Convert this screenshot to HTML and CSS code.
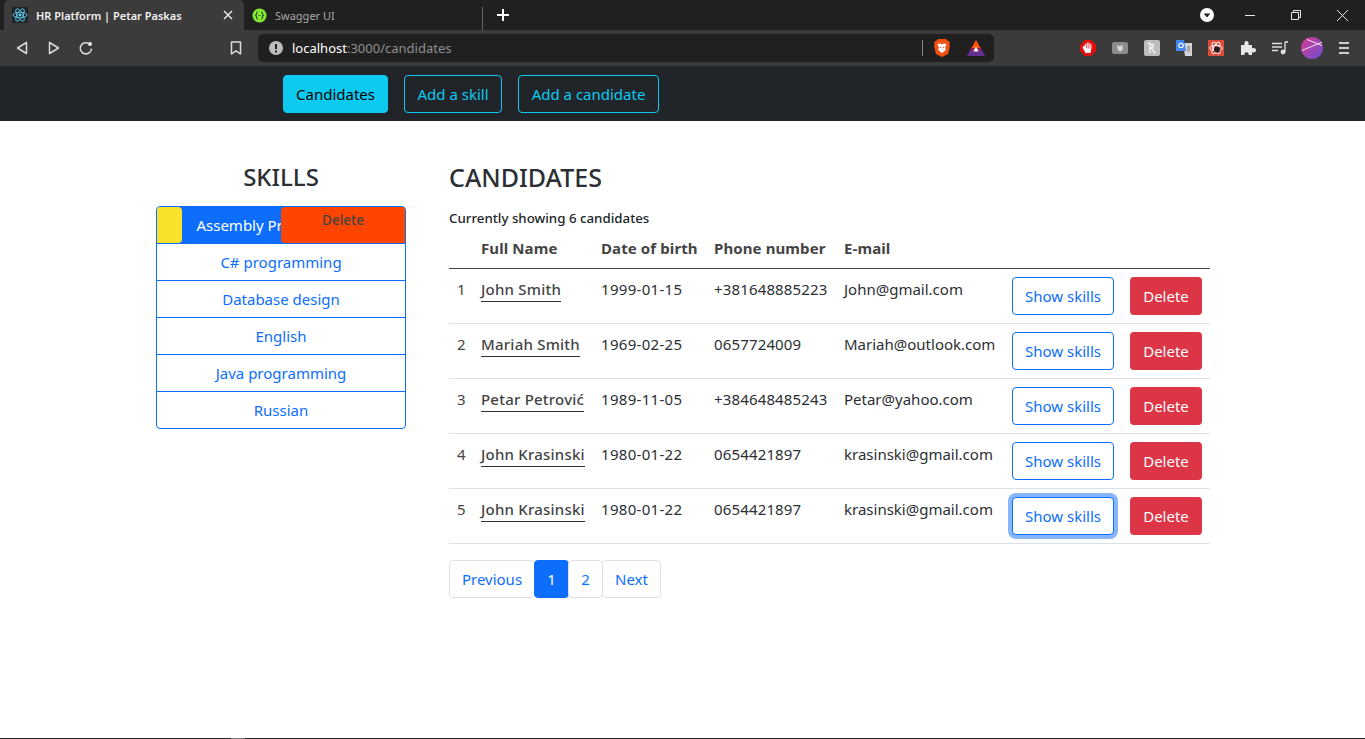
FILE: index.html
```html
<!DOCTYPE html>
<html lang="en">
<head>
<meta charset="utf-8">
<title>HR Platform | Petar Paskas</title>
<link rel="stylesheet" href="styles.css">
</head>
<body>
<div class="app">
  <div class="tabstrip">
    <div class="tab tab-active">
      <svg class="favicon" viewBox="0 0 16 16"><rect width="16" height="16" rx="1" fill="#20232a"/><g fill="none" stroke="#61dafb" stroke-width=".8"><ellipse cx="8" cy="8" rx="7" ry="2.8"/><ellipse cx="8" cy="8" rx="7" ry="2.8" transform="rotate(60 8 8)"/><ellipse cx="8" cy="8" rx="7" ry="2.8" transform="rotate(120 8 8)"/></g><circle cx="8" cy="8" r="1.4" fill="#61dafb"/></svg>
      <span class="tab-title">HR Platform | Petar Paskas</span>
      <svg class="tab-close" viewBox="0 0 10 10"><path d="M1 1l8 8M9 1l-8 8" stroke="#e8e8e8" stroke-width="1.5"/></svg>
    </div>
    <div class="tab tab-idle">
      <svg class="favicon" viewBox="0 0 16 16"><circle cx="8" cy="8" r="7.5" fill="#85ea2d"/><path d="M6 4C4.600 4 5.200 7.400 4 8c1.200.6.6 4 2 4M10 4c1.400 0 .8 3.400 2 4-1.200.6-.6 4-2 4" fill="none" stroke="#173647" stroke-width="1.100"/><path d="M6.600 8h.6M7.800 8h.6M9 8h.6" stroke="#173647" stroke-width="1"/></svg>
      <span class="tab-title-idle">Swagger UI</span>
    </div>
    <div class="tab-sep"></div>
    <svg class="newtab" viewBox="0 0 12 12"><path d="M6 0v12M0 6h12" stroke="#fff" stroke-width="2"/></svg>
    <div class="spacer"></div>
    <svg class="tab-search" viewBox="0 0 14 14"><circle cx="7" cy="7" r="7" fill="#fff"/><path d="M3.600 5.400h6.800L7 9.600z" fill="#202020"/></svg>
    <div class="winbtn"><svg viewBox="0 0 10 10" width="10" height="10"><path d="M0 5.500h10" stroke="#e8e8e8"/></svg></div>
    <div class="winbtn"><svg viewBox="0 0 10 10" width="10" height="10"><path d="M.5 2.500h7v7h-7zM2.500 2.500v-2h7v7h-2" fill="none" stroke="#e8e8e8"/></svg></div>
    <div class="winbtn"><svg viewBox="0 0 10 10" width="11" height="11"><path d="M0 0l10 10M10 0L0 10" stroke="#e8e8e8" stroke-width=".9"/></svg></div>
  </div>

  <div class="toolbar">
    <svg class="tool tool-back" viewBox="0 0 12 14"><path d="M10.500 1.500v11L1.500 7z" fill="none" stroke="#dcdcdc" stroke-width="1.500" stroke-linejoin="round"/></svg>
    <svg class="tool tool-forward" viewBox="0 0 12 14"><path d="M1.500 1.500v11l9-5.500z" fill="none" stroke="#dcdcdc" stroke-width="1.500" stroke-linejoin="round"/></svg>
    <svg class="tool tool-reload" viewBox="0 0 14 14"><path d="M12.500 7.500A5.600 5.600 0 1 1 9.500 2.300" fill="none" stroke="#dcdcdc" stroke-width="1.500"/><circle cx="11" cy="3" r="2" fill="#e8e8e8"/></svg>
    <svg class="tool tool-bookmark" viewBox="0 0 12 14"><path d="M1.500 1h9v12L6 9.800 1.500 13z" fill="none" stroke="#dcdcdc" stroke-width="1.500" stroke-linejoin="round"/></svg>
    <div class="urlbar">
      <svg class="url-alert" viewBox="0 0 14 14"><circle cx="7" cy="7" r="7" fill="#bdbdbd"/><path d="M7 3v5M7 9.500v2" stroke="#202020" stroke-width="2"/></svg>
      <span class="url-host">localhost</span><span class="url-path">:3000/candidates</span>
      <div class="spacer"></div>
      <div class="url-sep"></div>
      <svg class="url-brave" viewBox="0 0 16 18"><path d="M4 0h8l1.500 1.500L16 3l-.6 2.500.6 1.500-2 8L8 18l-6-3-2-8 .6-1.500L0 3l2.500-1.500z" fill="#f1500f"/><path d="M3.500 5L6 4.500l2 .8 2-.8L12.500 5 11 9l1 1.500L9.500 13 8 14l-1.500-1L4 10.500 5 9z" fill="#fff"/><path d="M6 8.200l1.200.6M10 8.200l-1.200.6" stroke="#f1500f" stroke-width="1"/></svg>
      <svg class="url-bat" viewBox="0 0 18 16"><path d="M9 0L0 16h18z" fill="#9e1f63"/><path d="M9 0L4.500 8h9z" fill="#ff5000"/><path d="M0 16l3-5.500h12l3 5.500z" fill="#662d91"/><path d="M9 6.500l-2.700 5h5.400z" fill="#fff"/></svg>
    </div>
    <div class="ext-group">
      <div class="ext"><svg viewBox="0 0 16 16" width="16" height="16"><path d="M5 0h6l5 5v6l-5 5H5l-5-5V5z" fill="#e60c0c"/><path d="M5.300 8V4.500M7.200 8V3M9 8V3M10.800 8.500V4.500M5.300 8l-1-1.200C3.500 6.200 3 7.200 3.500 8.200L6 12.500h4l.8-4" fill="#fff" stroke="#fff" stroke-width="1.200" stroke-linecap="round"/></svg></div>
      <div class="ext"><svg viewBox="0 0 16 12" width="16" height="12"><rect width="16" height="12" rx="2.500" fill="#8c8c8c"/><path d="M5 3l3 1.500 2-2 1 4-2 3-3-1z" fill="#d8d8d8"/></svg></div>
      <div class="ext"><svg viewBox="0 0 16 16" width="16" height="16"><rect width="16" height="16" rx="2" fill="#bdbdbd"/><path d="M6 2.500V13M3.500 3.500h2.500M6 8c2 0 3.500-1 3.500-2.500S7.500 3.500 7.500 5.500M6 8c2.500 0 3 1.500 3.500 3.500.3 1 1 1.500 2 1" fill="none" stroke="#fff" stroke-width="1.100"/></svg></div>
      <div class="ext"><svg viewBox="0 0 16 16" width="16" height="16"><path d="M7 3h9v13H9z" fill="#d6d6d6"/><path d="M0 0h8l2 11H0z" fill="#4285f4"/><circle cx="5" cy="5.500" r="2.200" fill="none" stroke="#fff" stroke-width="1.100"/><path d="M11 7h3.500M12.800 6v1M11.500 8c.6 2 1.500 3 3 3.500M14 8c-.5 2-1.500 3-3 3.500" stroke="#777" stroke-width=".8" fill="none"/></svg></div>
      <div class="ext"><svg viewBox="0 0 16 16" width="16" height="16"><rect width="16" height="16" fill="#dd4b39"/><g fill="none" stroke="#fff" stroke-width=".9"><ellipse cx="8" cy="8" rx="6.500" ry="2.600"/><ellipse cx="8" cy="8" rx="6.500" ry="2.600" transform="rotate(60 8 8)"/><ellipse cx="8" cy="8" rx="6.500" ry="2.600" transform="rotate(120 8 8)"/></g><circle cx="9" cy="9.500" r="3" fill="#2a1a1a"/></svg></div>
      <div class="ext"><svg viewBox="0 0 16 16" width="16" height="16"><path d="M1 5h3.500C4 2.500 5 1 6.500 1S9 2.500 8.500 5H12v3.300c2.500-.6 4 .4 4 2s-1.500 2.600-4 2V15H8.500c.5-2-.5-2.800-2-2.800s-2.500.8-2 2.800H1z" fill="#e8e8e8"/></svg></div>
      <div class="ext"><svg viewBox="0 0 16 14" width="16" height="14"><path d="M0 2.500h10M0 6h10M0 9.500h6" stroke="#e0e0e0" stroke-width="1.300"/><path d="M13 1v10" stroke="#e0e0e0" stroke-width="1.300"/><path d="M13 1h3" stroke="#e0e0e0" stroke-width="1.600"/><circle cx="11" cy="11" r="2.400" fill="#e0e0e0"/></svg></div>
      <div class="ext"><svg viewBox="0 0 22 22" width="22" height="22"><defs><linearGradient id="avatar" x1="0" y1="0" x2="1" y2="1"><stop offset="0" stop-color="#d83a8c"/><stop offset="1" stop-color="#6d4fd6"/></linearGradient></defs><circle cx="11" cy="11" r="11" fill="url(#avatar)"/><path d="M1 13.500L21 5M6 2.500l15 6" stroke="#f3e3ee" stroke-width="1"/></svg></div>
      <div class="ext"><svg viewBox="0 0 10 12" width="10" height="12"><path d="M0 1h10M0 6h10M0 11h10" stroke="#cfcfcf" stroke-width="1.800"/></svg></div>
    </div>
  </div>

  <nav class="navbar">
    <a class="nav-btn nav-btn-active">Candidates</a>
    <a class="nav-btn nav-btn-skill">Add a skill</a>
    <a class="nav-btn nav-btn-candidate">Add a candidate</a>
  </nav>

  <main class="main">
    <section class="skills">
      <h3 class="heading heading-center">SKILLS</h3>
      <ul class="skill-list">
        <li class="skill skill-active">Assembly Programming
          <span class="skill-color"></span>
          <span class="skill-delete">Delete</span>
        </li>
        <li class="skill">C# programming</li>
        <li class="skill">Database design</li>
        <li class="skill">English</li>
        <li class="skill">Java programming</li>
        <li class="skill">Russian</li>
      </ul>
    </section>

    <section class="candidates">
      <h3 class="heading">CANDIDATES</h3>
      <p class="count">Currently showing 6 candidates</p>
      <table class="table">
        <colgroup>
          <col class="c-num"><col class="c-name"><col class="c-dob"><col class="c-phone"><col class="c-mail"><col class="c-show"><col class="c-del">
        </colgroup>
        <thead>
          <tr><th></th><th>Full Name</th><th>Date of birth</th><th>Phone number</th><th>E-mail</th><th></th><th></th></tr>
        </thead>
        <tbody>
          <tr><td class="num">1</td><td><span class="name">John Smith</span></td><td class="date">1999-01-15</td><td class="phone">+381648885223</td><td>John@gmail.com</td><td><button class="btn btn-outline">Show skills</button></td><td><button class="btn btn-danger">Delete</button></td></tr>
          <tr><td class="num">2</td><td><span class="name">Mariah Smith</span></td><td class="date">1969-02-25</td><td class="phone">0657724009</td><td>Mariah@outlook.com</td><td><button class="btn btn-outline">Show skills</button></td><td><button class="btn btn-danger">Delete</button></td></tr>
          <tr><td class="num">3</td><td><span class="name">Petar Petrović</span></td><td class="date">1989-11-05</td><td class="phone">+384648485243</td><td>Petar@yahoo.com</td><td><button class="btn btn-outline">Show skills</button></td><td><button class="btn btn-danger">Delete</button></td></tr>
          <tr><td class="num">4</td><td><span class="name">John Krasinski</span></td><td class="date">1980-01-22</td><td class="phone">0654421897</td><td>krasinski@gmail.com</td><td><button class="btn btn-outline">Show skills</button></td><td><button class="btn btn-danger">Delete</button></td></tr>
          <tr><td class="num">5</td><td><span class="name">John Krasinski</span></td><td class="date">1980-01-22</td><td class="phone">0654421897</td><td>krasinski@gmail.com</td><td><button class="btn btn-outline btn-focus">Show skills</button></td><td><button class="btn btn-danger">Delete</button></td></tr>
        </tbody>
      </table>
      <div class="pagination">
        <a class="page page-prev">Previous</a>
        <a class="page page-num page-current">1</a>
        <a class="page page-num">2</a>
        <a class="page page-next">Next</a>
      </div>
    </section>
  </main>

  <div class="bottom-edge"><div class="bottom-mark"></div></div>
</div>
</body>
</html>
```
FILE: styles.css
```css
* { box-sizing: border-box; }
html, body { margin: 0; height: 100%; overflow: hidden; }
body { font-family: "Noto Sans", "Open Sans", sans-serif; font-size: 15px; color: #212529; background: #fff; }
.app { height: 739px; display: flex; flex-direction: column; }
.spacer { flex: 1; }

/* browser tab strip */
.tabstrip { height: 30px; flex: none; background: #202020; display: flex; align-items: center; padding-left: 4px; }
.tab { height: 30px; display: flex; align-items: center; flex: none; }
.tab-active { width: 240px; background: #3b3b3b; border-radius: 5px 5px 0 0; padding: 0 7px 0 8px; }
.tab-idle { width: 239px; padding-left: 8px; }
.favicon { width: 16px; height: 16px; flex: none; }
.tab-idle .favicon { width: 15px; height: 15px; }
.tab-title { margin-left: 8px; font-size: 11px; font-weight: 600; color: #f2f2f2; flex: 1; white-space: nowrap; }
.tab-title-idle { margin-left: 8px; font-size: 11px; color: #a8a8a8; }
.tab-close { width: 10px; height: 10px; margin-right: 4px; }
.tab-sep { width: 1px; height: 23px; margin-top: 7px; background: #666; flex: none; margin-left: -1px; }
.newtab { width: 12px; height: 12px; margin-left: 14px; flex: none; }
.tab-search { width: 14px; height: 14px; margin-right: 13px; flex: none; }
.winbtn { width: 46px; height: 30px; display: flex; align-items: center; justify-content: center; flex: none; }

/* browser toolbar */
.toolbar { height: 36px; flex: none; background: #3b3b3b; display: flex; align-items: center; padding-left: 16px; }
.tool { flex: none; }
.tool-back { width: 12px; height: 14px; }
.tool-forward { width: 12px; height: 14px; margin-left: 20px; }
.tool-reload { width: 14px; height: 14px; margin-left: 19px; }
.tool-bookmark { width: 12px; height: 14px; margin-left: 137px; }
.urlbar { width: 736px; height: 28px; margin-left: 16px; background: #202020; border-radius: 5px; display: flex; align-items: center; padding: 0 9px 0 11px; flex: none; }
.url-alert { width: 14px; height: 14px; margin-right: 9px; flex: none; }
.url-host { font-size: 13px; color: #fff; }
.url-path { font-size: 13px; color: #8f8f8f; }
.url-sep { width: 1px; height: 16px; background: #888; margin-right: 11px; }
.url-brave { width: 16px; height: 18px; margin-right: 17px; }
.url-bat { width: 18px; height: 16px; }
.ext-group { display: flex; margin-left: 78px; }
.ext { width: 32px; height: 32px; display: flex; align-items: center; justify-content: center; flex: none; }

/* page navbar */
.navbar { height: 55px; flex: none; background: #212529; display: flex; align-items: flex-start; gap: 16px; padding: 9px 0 0 283px; }
.nav-btn { height: 38px; display: flex; align-items: center; justify-content: center; border: 1px solid #0dcaf0; border-radius: 4px; color: #0dcaf0; font-size: 15px; }
.nav-btn-active { width: 105px; background: #0dcaf0; color: #000; }
.nav-btn-skill { width: 98px; }
.nav-btn-candidate { width: 141px; }

/* main layout */
.main { flex: 1; display: flex; gap: 43px; padding: 37px 0 0 156px; min-height: 0; }
.skills { width: 250px; flex: none; }
.candidates { width: 761px; flex: none; }
.heading { margin: 0; font-size: 25px; font-weight: 500; line-height: 38px; height: 48px; color: #2b2f33; }
.heading-center { text-align: center; font-size: 24px; }

/* skills list */
.skill-list { position: relative; list-style: none; margin: 0; padding: 0; border: 1px solid #0d6efd; border-radius: 4px; overflow: hidden; }
.skill { height: 37px; line-height: 36px; text-align: center; color: #0d6efd; border-bottom: 1px solid #0d6efd; white-space: nowrap; }
.skill:last-child { height: 36px; border-bottom: 0; }
.skill-active { position: relative; background: #0d6efd; color: #fff; }
.skill-color { position: absolute; left: 0; top: 0; width: 25px; height: 36px; background: #f9e22b; border-radius: 0 4px 4px 0; }
.skill-delete { position: absolute; right: 0; top: 0; width: 124px; height: 36px; background: #ff4500; border-radius: 4px 0 0 4px; color: #444; font-size: 13.500px; font-weight: 500; line-height: 26px; }

/* candidates */
.count { margin: 0; height: 24px; font-size: 13.300px; font-weight: 500; line-height: 24px; }
.table { width: 761px; table-layout: fixed; border-collapse: collapse; }
.c-num { width: 24px; } .c-name { width: 120px; } .c-dob { width: 113px; } .c-phone { width: 130px; }
.c-mail { width: 168px; } .c-show { width: 118px; } .c-del { width: 88px; }
th { height: 38px; padding: 0 8px 2px; text-align: left; font-weight: 700; font-size: 15px; letter-spacing: .1px; color: #444; border-bottom: 1px solid #444; white-space: nowrap; }
td { height: 55px; padding: 8px; vertical-align: top; border-bottom: 1px solid #dee2e6; white-space: nowrap; color: #2b2f33; line-height: 24px; }
td.num { color: #444; }
td.date { letter-spacing: .3px; }
td.phone { letter-spacing: .15px; }
.name { display: inline-block; color: #444; font-weight: 500; letter-spacing: .22px; border-bottom: 1px solid #333; line-height: 24px; }
.btn { height: 38px; font-family: inherit; font-size: 15px; padding: 0 12px; border-radius: 4px; border: 1px solid transparent; background: none; display: block; }
.btn-outline { width: 102px; border-color: #0d6efd; color: #0d6efd; background: #fff; }
.btn-focus { box-shadow: 0 0 0 4px rgba(13, 110, 253, .5); }
.btn-danger { width: 72px; background: #dc3545; color: #fff; }

/* pagination */
.pagination { display: flex; margin-top: 16px; }
.page { height: 38px; display: flex; align-items: center; justify-content: center; color: #0d6efd; border: 1px solid #dee2e6; border-radius: 4px; background: #fff; margin-left: -1px; }
.page:first-child { margin-left: 0; }
.page-prev { width: 86px; }
.page-num { width: 35px; }
.page-next { width: 59px; }
.page-current { background: #0d6efd; border-color: #0d6efd; color: #fff; }

.bottom-edge { height: 1px; flex: none; background: #222; padding-left: 231px; }
.bottom-mark { width: 14px; height: 1px; background: #777; }
```
